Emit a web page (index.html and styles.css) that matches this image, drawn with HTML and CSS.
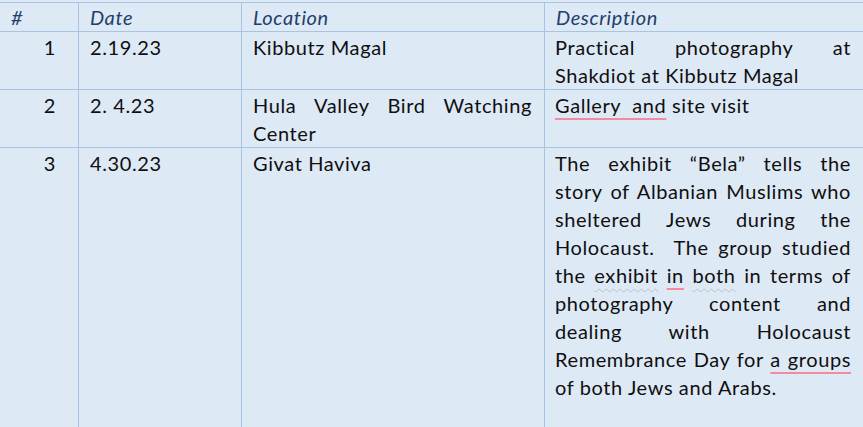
FILE: index.html
```html
<!DOCTYPE html>
<html lang="en">
<head>
<meta charset="utf-8">
<title>Visits</title>
<link rel="stylesheet" href="styles.css">
</head>
<body>
<div class="page">
  <table class="visits">
    <colgroup>
      <col class="c-num">
      <col class="c-date">
      <col class="c-loc">
      <col class="c-desc">
    </colgroup>
    <thead>
      <tr>
        <th class="num-h">#</th>
        <th>Date</th>
        <th>Location</th>
        <th>Description</th>
      </tr>
    </thead>
    <tbody>
      <tr>
        <td class="num">1</td>
        <td>2.19.23</td>
        <td class="just">Kibbutz Magal</td>
        <td class="just">Practical photography at Shakdiot at Kibbutz Magal</td>
      </tr>
      <tr>
        <td class="num">2</td>
        <td>2. 4.23</td>
        <td class="just">Hula Valley Bird Watching Center</td>
        <td class="just"><span class="spell">Gallery&nbsp; and</span> site visit</td>
      </tr>
      <tr class="tall">
        <td class="num">3</td>
        <td>4.30.23</td>
        <td class="just">Givat Haviva</td>
        <td class="just">The exhibit &ldquo;Bela&rdquo; tells the story of Albanian Muslims who sheltered Jews during the Holocaust.&nbsp; The group studied the <span class="grammar">exhibit</span> <span class="spell">in</span> <span class="grammar">both</span> in terms of photography content and dealing with Holocaust Remembrance Day for <span class="spell">a groups</span> of both Jews and Arabs.</td>
      </tr>
    </tbody>
  </table>
</div>
</body>
</html>
```

FILE: styles.css
```css
html, body {
  margin: 0;
  padding: 0;
  background: #dee9f6;
}

.page {
  width: 863px;
  height: 427px;
  overflow: hidden;
  padding-top: 2px;
  box-sizing: border-box;
}

.visits {
  border-collapse: collapse;
  table-layout: fixed;
  width: 895px;
  margin-left: -20px;
  font-family: Lato, "Liberation Sans", sans-serif;
  font-size: 20px;
  letter-spacing: 0.6px;
  line-height: 28px;
  color: #0f0f0f;
}

.c-num { width: 98px; }
.c-date { width: 163px; }
.c-loc { width: 303px; }
.c-desc { width: 331px; }

.visits th,
.visits td {
  border: 1px solid #a9c3e3;
  padding: 0 12px 0 11px;
  vertical-align: top;
  text-align: left;
}

.visits th {
  font-weight: normal;
  font-style: italic;
  color: #22406a;
  height: 28px;
}

.visits tbody td {
  padding-top: 1px;
}

.visits th.num-h {
  padding-left: 30px;
}

.visits td.num {
  text-align: right;
  padding-right: 22px;
}

.visits td.just {
  text-align: justify;
}

.visits td:last-child {
  padding-left: 10px;
  padding-right: 24px;
}

.visits tr.tall td {
  height: 300px;
}

.spell {
  text-decoration: underline;
  text-decoration-color: #f48aa0;
  text-decoration-thickness: 2px;
  text-underline-offset: 5px;
}

.grammar {
  text-decoration: underline wavy;
  text-decoration-color: #b9bfc8;
  text-decoration-thickness: 1px;
  text-underline-offset: 5px;
}
```
